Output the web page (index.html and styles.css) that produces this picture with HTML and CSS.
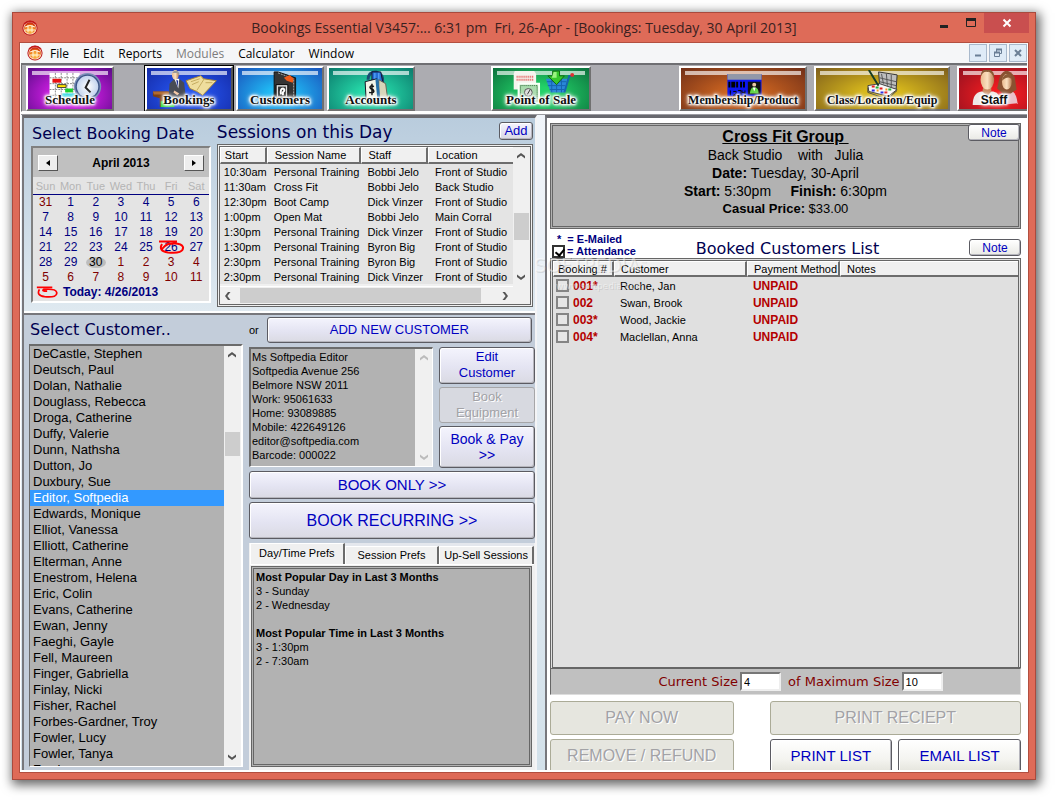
FILE: index.html
```html
<!DOCTYPE html>
<html lang="en">
<head>
<meta charset="utf-8">
<title>Bookings Essential</title>
<link rel="stylesheet" href="styles.css">
</head>
<body>
<svg class="defs" width="0" height="0" aria-hidden="true">
  <defs>
    <radialGradient id="orb" cx=".5" cy=".7" r=".7"><stop offset="0" stop-color="#ffd45a"/><stop offset=".6" stop-color="#ee7a18"/><stop offset="1" stop-color="#c01010"/></radialGradient>
    <symbol id="logo" viewBox="0 0 16 16">
      <circle cx="8" cy="8" r="7.6" fill="#b9141a"/><circle cx="8" cy="8" r="6.6" fill="#ffe9c8"/><circle cx="8" cy="8" r="5.8" fill="url(#orb)"/>
      <path d="M3 7Q8 4 13 7M3 10H13M6 5V12.500M10 5V12.500" fill="none" stroke="#fff3dc" stroke-width="1"/>
      <path d="M2 4Q8-1 14 4" fill="none" stroke="#c41a1a" stroke-width="1.600"/>
    </symbol>
    <symbol id="up" viewBox="0 0 8 6"><path d="M0 5.500V3L4 0L8 3V5.500L4 2.400Z" fill="currentColor"/></symbol>
    <symbol id="down" viewBox="0 0 8 6"><path d="M0 .5V3L4 6L8 3V.5L4 3.600Z" fill="currentColor"/></symbol>
    <symbol id="left" viewBox="0 0 6 8"><path d="M5.500 0H3L0 4L3 8H5.500L2.400 4Z" fill="currentColor"/></symbol>
    <symbol id="right" viewBox="0 0 6 8"><path d="M.5 0H3L6 4L3 8H.5L3.600 4Z" fill="currentColor"/></symbol>
    <linearGradient id="skin" x2="1"><stop offset="0" stop-color="#e9b98e"/><stop offset=".5" stop-color="#fbe0c0"/><stop offset="1" stop-color="#b87e55"/></linearGradient>
    <radialGradient id="clockface"><stop offset="0" stop-color="#fff"/><stop offset="1" stop-color="#c3d4ee"/></radialGradient>
  </defs>
</svg>

<div class="window">
  <header class="titlebar">
    <svg class="logo"><use href="#logo"/></svg>
    <h1>Bookings Essential V3457:... 6:31 pm&nbsp; Fri, 26-Apr - [Bookings: Tuesday, 30 April 2013]</h1>
    <div class="caption">
      <button type="button" aria-label="Minimize"><svg width="10" height="12"><path d="M1 9.500H9" stroke="#222" stroke-width="3"/></svg></button>
      <button type="button" aria-label="Maximize"><svg width="12" height="12"><path d="M1.500 2V9.500H10.500V2" fill="none" stroke="#222"/><path d="M1 2.500H11" stroke="#222" stroke-width="3"/></svg></button>
      <button type="button" class="close" aria-label="Close"><svg width="10" height="10"><path d="M1.500 1.500L8.500 8.500M8.500 1.500L1.500 8.500" stroke="#fff" stroke-width="2"/></svg></button>
    </div>
  </header>

  <div class="client">
    <nav class="menubar">
      <svg class="logo"><use href="#logo"/></svg>
      <button type="button">File</button>
      <button type="button">Edit</button>
      <button type="button">Reports</button>
      <button type="button" disabled>Modules</button>
      <button type="button">Calculator</button>
      <button type="button">Window</button>
      <div class="mdi">
        <button type="button" aria-label="Minimize child"><svg width="8" height="8"><path d="M1 6.500H7" stroke="#6b7f96" stroke-width="2"/></svg></button>
        <button type="button" aria-label="Restore child"><svg width="10" height="10"><path d="M3.500 4V1.500H8.500V5.500H7M1.500 4.500H6.500V8.500H1.500Z" fill="none" stroke="#6b7f96"/><path d="M3 1.500H9M1 4.500H7" stroke="#6b7f96" stroke-width="2"/></svg></button>
        <button type="button" aria-label="Close child"><svg width="8" height="8"><path d="M1 1L7 7M7 1L1 7" stroke="#6b7f96" stroke-width="2"/></svg></button>
      </div>
    </nav>

    <div class="toolbar">
      <button type="button" class="tool purple">
        <svg viewBox="0 0 82 40">
          <path d="M20 3H51V30H20Z" fill="#fff"/><path d="M20 8H51M20 14H51M20 20H51M20 26H51M26 3V30M32 3V30M38 3V30M44 3V30" stroke="#888" stroke-dasharray="2 1"/>
          <path d="M23 9H32V13H23Z" fill="#e81010"/><path d="M28 15H37V18H28Z" fill="#ffe400" stroke="#443"/><path d="M36 19H44V23H36Z" fill="#18d030"/><path d="M33 26H50" stroke="#30d8e8" stroke-width="4"/>
          <circle cx="59" cy="17" r="14" fill="#7d91b8"/><circle cx="59" cy="17" r="12.500" fill="#3c5488"/><circle cx="59" cy="17" r="11" fill="url(#clockface)"/><path d="M61 10L57 18L62 23" fill="none" stroke="#222" stroke-width="2"/>
        </svg><span>Schedule</span></button>
      <button type="button" class="tool blue active">
        <svg viewBox="0 0 82 40">
          <path d="M4 22H20L24 27H34V32H16V38H11V29L4 27Z" fill="#7a3f16"/><path d="M4 22H20L22 25H5Z" fill="#b06a30"/><path d="M12 32H26V38H12Z" fill="#2edb3e"/>
          <path d="M20 31L21 14L26 9H31L36 13L38 30L30 33Z" fill="#474b55"/><path d="M26 9H31L30 19Z" fill="#fff"/><path d="M28 10L30 11L29 18Z" fill="#182a90"/><ellipse cx="27" cy="5" rx="3.500" ry="5" fill="url(#skin)"/><path d="M24 3Q27-2 31 3V6L29 3Z" fill="#999"/><path d="M26 21L31 24L29 26L25 23Z" fill="#f4c8a4"/>
          <path d="M38 11L53 6L56 9L69 11L55 26L49 22L42 19Z" fill="#efdd9d" stroke="#a8873a"/><path d="M53 6L56 10L49 21M43 12L52 9M44 15L51 12M58 13L65 13" fill="none" stroke="#c3aa5f"/>
        </svg><span>Bookings</span></button>
      <button type="button" class="tool sky">
        <svg viewBox="0 0 82 40">
          <path d="M35 2H39L57 8V30H35Z" fill="#343434" stroke="#111"/><path d="M39 3L55 9V28" fill="none" stroke="#aaa" stroke-dasharray="2 1"/><path d="M45 8L51 5L55 9L54 13L48 11Z" fill="#f05a18"/><path d="M37 15H49V28H37Z" fill="#ddd" stroke="#000"/><path d="M39 17H47V27H39Z" fill="#333"/><path d="M42 25Q41 19 44 19Q47 20 44 23V26" fill="none" stroke="#fff" stroke-width="2"/>
        </svg><span>Customers</span></button>
      <button type="button" class="tool teal">
        <svg viewBox="0 0 82 40">
          <path d="M38 10Q38 2 46 2Q54 4 53 13" fill="none" stroke="#194b72" stroke-width="3"/><path d="M42 2H51L53 12L42 13Z" fill="#2670d8" stroke="#113"/><path d="M45 3V12M49 3V12" stroke="#68b4ff"/>
          <path d="M35 12L47 9L49 29L36 31Z" fill="#f1f4e8" stroke="#112"/><path d="M49 10L56 14L58 29H49Z" fill="#d8d5b8" stroke="#665"/><path d="M47 9L49 30" stroke="#2670a8" stroke-width="3"/><path d="M44 17Q40 15 40 18Q41 20 43 20Q46 24 39 23M42 14V26" fill="none" stroke="#111" stroke-width="1.500"/>
        </svg><span>Accounts</span></button>
      <i class="gap pos-gap"></i>
      <button type="button" class="tool green wide">
        <svg viewBox="0 0 94 40">
          <path d="M20 1H40L42 4V20H19V4Z" fill="#f4f4ee"/><path d="M22 7H39M22 10H39" stroke="#e25555" stroke-width="2" stroke-dasharray="1 1"/><path d="M24 14H45V34H24Z" fill="#a9dcae" stroke="#f8fff8" stroke-width="2"/><path d="M26 16H43V32H26Z" fill="none" stroke="#356a3e" stroke-dasharray="1 1"/><circle cx="34" cy="23" r="4" fill="#ddd" stroke="#555"/><path d="M33 25L36 20" stroke="#333"/>
          <path d="M52 9H74L71 23H57Z" fill="#2a87d8"/><path d="M53 12H73M54 16H72M56 20H71M58 9V23M63 9V23M68 9V23" stroke="#1564b0"/><path d="M71 23L76 6H79" fill="none" stroke="#1564b0" stroke-width="2"/><circle cx="79" cy="5" r="2" fill="#e03030"/>
          <path d="M59 1H66V6H71L63 15L54 6H59Z" fill="#36c72c" stroke="#116811"/><path d="M60 2H63V8H58Z" fill="#9bf480"/><path d="M74 25V35" stroke="#ddd" stroke-width="2"/>
        </svg><span>Point of Sale</span></button>
      <i class="gap member-gap"></i>
      <button type="button" class="tool rust member">
        <svg viewBox="0 0 122 40">
          <path d="M45 4H80V27H45Z" fill="#0b16f0"/><path d="M45 4H80V10H45Z" fill="#9298a8"/><path d="M47 12V18M50 12V18M52 12V18M55 12V18M59 12V18M62 12V18" stroke="#000" stroke-width="2"/><path d="M66 12H79V25H66Z" fill="#111"/><circle cx="72.500" cy="15" r="2" fill="#eac7a8"/><path d="M68 24Q69 17 72 18Q77 17 77 24Z" fill="#62d346"/><path d="M71 18H74L72.500 22Z" fill="#fff"/>
          <path d="M48 21V26M51 22H54V24L51 26H54M56 21H59V26H56M60 21V23H63M63 21V26" fill="none" stroke="#000"/>
        </svg><span>Membership/Product</span></button>
      <button type="button" class="tool gold equip">
        <svg viewBox="0 0 129 40">
          <path d="M61 2L80 5L79 20L62 15Z" fill="#bdbdbd" stroke="#333"/><path d="M64 4L66 14M69 4L70 16M74 5V18M62 8L79 12M62 12L79 16" stroke="#555"/><path d="M50 16L62 14L80 20L71 27L51 22Z" fill="#f7f7f7" stroke="#444"/><path d="M50 18V23L70 30L80 21" fill="none" stroke="#444"/>
          <path d="M54 17H57M62 19H65M67 23H70" stroke="#e31b1b" stroke-width="2"/><path d="M58 18H61M71 20H74" stroke="#26b033" stroke-width="2"/><path d="M54 21H57M63 23H66" stroke="#262be0" stroke-width="2"/><path d="M59 21H61M68 20H70" stroke="#f59b18" stroke-width="2"/><path d="M51 0L59 13L61 16" fill="none" stroke="#153d24" stroke-width="2"/>
        </svg><span>Class/Location/Equip</span></button>
      <button type="button" class="tool red staff">
        <svg viewBox="0 0 82 40">
          <path d="M12 36Q12 23 21 22H33Q41 23 41 36Z" fill="#eee9e7"/><path d="M39 36Q39 24 44 22H53Q57 25 58 34Z" fill="#eac0c8"/><path d="M40 6Q47-5 55 7L57 20L51 24H43L37 19Z" fill="#8a5130"/><path d="M23 16H31V22L27 27L22 22Z" fill="#c98b62"/><ellipse cx="27" cy="10" rx="7" ry="10" fill="url(#skin)"/><ellipse cx="47" cy="12" rx="5" ry="8" fill="url(#skin)"/><path d="M20 8Q20-2 28-1Q35 1 34 9Q31 1 27 2Q22 1 20 8M42 11Q43 3 51 4L52 10Q49 5 42 11" fill="#8a5a36"/>
        </svg><span>Staff</span></button>
    </div>

    <main class="workspace">
      <div class="left-col">
        <section class="top-panel">
          <div class="date-pane">
            <h2>Select Booking Date</h2>
            <div class="calendar">
              <div class="cal-head">
                <button type="button" aria-label="Previous month"><svg width="4" height="6"><path d="M4 0V6L0 3Z"/></svg></button>
                <strong>April 2013</strong>
                <button type="button" aria-label="Next month"><svg width="4" height="6"><path d="M0 0V6L4 3Z"/></svg></button>
              </div>
              <table>
                <thead><tr><th>Sun</th><th>Mon</th><th>Tue</th><th>Wed</th><th>Thu</th><th>Fri</th><th>Sat</th></tr></thead>
                <tbody>
                <tr><td class="other">31</td><td>1</td><td>2</td><td>3</td><td>4</td><td>5</td><td>6</td></tr>
                <tr><td>7</td><td>8</td><td>9</td><td>10</td><td>11</td><td>12</td><td>13</td></tr>
                <tr><td>14</td><td>15</td><td>16</td><td>17</td><td>18</td><td>19</td><td>20</td></tr>
                <tr><td>21</td><td>22</td><td>23</td><td>24</td><td>25</td><td class="today">26<svg viewBox="0 0 26 14"><path d="M0 1.500H18M3 4Q-1 11 9 12.500Q25 14 24 7Q22 2 9 4Q5 6 3 9" fill="none" stroke="#f00" stroke-width="2"/></svg></td><td>27</td></tr>
                <tr><td>28</td><td>29</td><td class="selected"><span>30</span></td><td class="other">1</td><td class="other">2</td><td class="other">3</td><td class="other">4</td></tr>
                <tr><td class="other">5</td><td class="other">6</td><td class="other">7</td><td class="other">8</td><td class="other">9</td><td class="other">10</td><td class="other">11</td></tr>
                </tbody>
              </table>
              <div class="cal-foot"><svg viewBox="0 0 26 14"><path d="M0 1.500H18M3 4Q-1 11 9 12.500Q25 14 23 7Q22 3 8 4Q5 6 12 6" fill="none" stroke="#f00" stroke-width="2"/></svg>Today: 4/26/2013</div>
            </div>
          </div>

          <div class="session-pane">
            <div class="pane-head"><h2>Sessions on this Day</h2><button type="button" class="btn add">Add</button></div>
            <div class="session-box">
              <table class="grid sessions">
                <colgroup><col class="c-start"><col class="c-name"><col class="c-staff"><col class="c-loc"></colgroup>
                <thead><tr><th>Start</th><th>Session Name</th><th>Staff</th><th>Location</th></tr></thead>
                <tbody>
                <tr><td>10:30am</td><td>Personal Training</td><td>Bobbi Jelo</td><td>Front of Studio</td></tr>
                <tr><td>11:30am</td><td>Cross Fit</td><td>Bobbi Jelo</td><td>Back Studio</td></tr>
                <tr><td>12:30pm</td><td>Boot Camp</td><td>Dick Vinzer</td><td>Front of Studio</td></tr>
                <tr><td>1:00pm</td><td>Open Mat</td><td>Bobbi Jelo</td><td>Main Corral</td></tr>
                <tr><td>1:30pm</td><td>Personal Training</td><td>Dick Vinzer</td><td>Front of Studio</td></tr>
                <tr><td>1:30pm</td><td>Personal Training</td><td>Byron Big</td><td>Front of Studio</td></tr>
                <tr><td>2:30pm</td><td>Personal Training</td><td>Byron Big</td><td>Front of Studio</td></tr>
                <tr><td>2:30pm</td><td>Personal Training</td><td>Dick Vinzer</td><td>Front of Studio</td></tr>
                </tbody>
              </table>
              <div class="vscroll session-v"><svg><use href="#up"/></svg><i></i><svg><use href="#down"/></svg></div>
              <div class="hscroll"><svg><use href="#left"/></svg><i></i><svg><use href="#right"/></svg></div>
            </div>
          </div>
        </section>

        <section class="bottom-panel">
          <div class="customer-pane">
            <h2 id="cust-label">Select Customer..</h2>
            <div class="customer-box">
              <ul role="listbox" aria-labelledby="cust-label">
                <li role="option">DeCastle, Stephen</li><li role="option">Deutsch, Paul</li><li role="option">Dolan, Nathalie</li><li role="option">Douglass, Rebecca</li><li role="option">Droga, Catherine</li><li role="option">Duffy, Valerie</li><li role="option">Dunn, Nathsha</li><li role="option">Dutton, Jo</li><li role="option">Duxbury, Sue</li><li role="option" aria-selected="true">Editor, Softpedia</li><li role="option">Edwards, Monique</li><li role="option">Elliot, Vanessa</li><li role="option">Elliott, Catherine</li><li role="option">Elterman, Anne</li><li role="option">Enestrom, Helena</li><li role="option">Eric, Colin</li><li role="option">Evans, Catherine</li><li role="option">Ewan, Jenny</li><li role="option">Faeghi, Gayle</li><li role="option">Fell, Maureen</li><li role="option">Finger, Gabriella</li><li role="option">Finlay, Nicki</li><li role="option">Fisher, Rachel</li><li role="option">Forbes-Gardner, Troy</li><li role="option">Fowler, Lucy</li><li role="option">Fowler, Tanya</li><li role="option">Fowler</li>
              </ul>
              <div class="vscroll customer-v"><svg><use href="#up"/></svg><i></i><svg><use href="#down"/></svg></div>
            </div>
          </div>

          <div class="booking-pane">
            <div class="new-row"><span>or</span><button type="button" class="btn">ADD NEW CUSTOMER</button></div>
            <div class="detail-row">
              <div class="address">
                <textarea readonly aria-label="Customer details">Ms Softpedia Editor
Softpedia Avenue 256
Belmore NSW 2011
Work: 95061633
Home: 93089885
Mobile: 422649126
editor@softpedia.com
Barcode: 000022</textarea>
                <div class="vscroll faint"><svg><use href="#up"/></svg><svg><use href="#down"/></svg></div>
              </div>
              <div class="side-buttons">
                <button type="button" class="btn">Edit Customer</button>
                <button type="button" class="btn" disabled>Book Equipment</button>
                <button type="button" class="btn pay">Book &amp; Pay &gt;&gt;</button>
              </div>
            </div>
            <button type="button" class="btn only">BOOK ONLY &gt;&gt;</button>
            <button type="button" class="btn recurring">BOOK RECURRING &gt;&gt;</button>
            <div class="tabs">
              <div class="tablist" role="tablist">
                <button type="button" role="tab" aria-selected="true">Day/Time Prefs</button>
                <button type="button" role="tab">Session Prefs</button>
                <button type="button" role="tab">Up-Sell Sessions</button>
              </div>
              <div class="tabpanel" role="tabpanel">
                <h3>Most Popular Day in Last 3 Months</h3>
                <p>3 - Sunday</p><p>2 - Wednesday</p>
                <h3 class="second">Most Popular Time in Last 3 Months</h3>
                <p>3 - 1:30pm</p><p>2 - 7:30am</p>
              </div>
            </div>
          </div>
        </section>
      </div>

      <section class="right-col">
        <div class="info">
          <button type="button" class="btn note">Note</button>
          <h2>Cross Fit Group&nbsp;</h2>
          <p>Back Studio&nbsp;&nbsp;&nbsp; with&nbsp;&nbsp; Julia</p>
          <p><b>Date:</b> Tuesday, 30-April</p>
          <p><b>Start:</b> 5:30pm&nbsp;&nbsp;&nbsp;&nbsp; <b>Finish:</b> 6:30pm</p>
          <p class="price"><b>Casual Price:</b> $33.00</p>
        </div>
        <div class="legend-row">
          <div class="legend"><div class="mailed">*&nbsp; = E-Mailed</div><label><input type="checkbox" checked>= Attendance</label></div>
          <h2>Booked Customers List</h2>
          <button type="button" class="btn note">Note</button>
        </div>
        <div class="booked-box">
          <table class="grid booked">
            <colgroup><col class="b-num"><col class="b-cust"><col class="b-pay"><col></colgroup>
            <thead><tr><th>Booking #</th><th>Customer</th><th>Payment Method</th><th>Notes</th></tr></thead>
            <tbody>
            <tr><td><label><input type="checkbox">001*</label></td><td>Roche, Jan</td><td class="unpaid">UNPAID</td><td></td></tr>
            <tr><td><label><input type="checkbox">002</label></td><td>Swan, Brook</td><td class="unpaid">UNPAID</td><td></td></tr>
            <tr><td><label><input type="checkbox">003*</label></td><td>Wood, Jackie</td><td class="unpaid">UNPAID</td><td></td></tr>
            <tr><td><label><input type="checkbox">004*</label></td><td>Maclellan, Anna</td><td class="unpaid">UNPAID</td><td></td></tr>
            </tbody>
          </table>
        </div>
        <div class="size-bar">
          <label for="cur">Current Size</label><input id="cur" type="text" value="4">
          <label for="max" class="max">of Maximum Size</label><input id="max" type="text" value="10">
        </div>
        <div class="actions">
          <button type="button" class="btn plain a-pay" disabled>PAY NOW</button>
          <button type="button" class="btn plain a-receipt" disabled>PRINT RECIEPT</button>
          <button type="button" class="btn plain a-remove" disabled>REMOVE / REFUND</button>
          <div class="pair"><button type="button" class="btn plain">PRINT LIST</button><button type="button" class="btn plain">EMAIL LIST</button></div>
        </div>
      </section>
      <div class="watermark" aria-hidden="true"><b>SOFTPEDIA<sup>™</sup></b><span>www.softpedia.com</span></div>
    </main>
  </div>
</div>
</body>
</html>
```
FILE: styles.css
```css
* { box-sizing: border-box; }
body {
  margin: 0;
  height: 100vh;
  padding: 12px 20px 20px 12px;
  background: #fff;
  font-family: "Liberation Sans", Arial, sans-serif;
  font-size: 11px;
  color: #000;
  overflow: hidden;
}
h1, h2, h3, p, ul { margin: 0; padding: 0; font-weight: normal; }
button { font: inherit; margin: 0; padding: 0; }
.defs { position: absolute; }

/* Window frame */
.window {
  height: 100%;
  display: flex;
  flex-direction: column;
  padding: 0 6px 6px;
  background: #de6b58;
  border: 1px solid #a94a3d;
  box-shadow: 2px 3px 10px 2px rgba(0, 0, 0, .6);
}
.titlebar {
  flex: none;
  height: 29px;
  display: flex;
  align-items: center;
  padding-left: 3px;
}
.logo { flex: none; width: 16px; height: 16px; }
.titlebar h1 {
  flex: 1;
  padding-left: 80px;
  text-align: center;
  font: 14px/30px "Open Sans", "Noto Sans", sans-serif;
  color: #3a211f;
  white-space: nowrap;
}
.caption { flex: none; align-self: flex-start; display: flex; }
.caption button {
  width: 27px;
  height: 20px;
  display: grid;
  place-items: center;
  border: 0;
  background: none;
}
.caption .close { width: 45px; background: #c94f4f; }
.client {
  flex: 1;
  min-height: 0;
  display: flex;
  flex-direction: column;
  border: 1px solid #b24f40;
  background: #fff;
  padding: 0 1px 2px;
}

/* Menu */
.menubar {
  flex: none;
  display: flex;
  align-items: center;
  height: 20px;
  padding-left: 6px;
  background: #f5f6f8;
  font-family: "Open Sans", "Noto Sans", sans-serif;
  font-size: 12px;
}
.menubar > button { border: 0; background: none; padding: 0 7px; color: #000; }
.menubar > button:disabled { color: #7d7d7d; }
.mdi { margin-left: auto; display: flex; gap: 2px; }
.mdi button {
  width: 18px;
  height: 18px;
  display: grid;
  place-items: center;
  border: 1px solid #a9b9cc;
  background: #dfebf7;
}

/* Picture toolbar */
.toolbar {
  flex: none;
  display: flex;
  height: 49px;
  padding: 1px 0 0 4px;
  overflow: hidden;
  background: #acacb1;
  border-top: 2px solid #6f6f73;
  border-left: 1px solid #6f6f73;
  border-bottom: 1px solid #fff;
}
.tool {
  --edge: #500a80;
  --core: #e020f0;
  flex: none;
  position: relative;
  width: 88px;
  height: 45px;
  margin-right: 3px;
  border: 2px solid;
  border-color: #fff #707070 #707070 #fff;
  background: radial-gradient(ellipse at 50% 65%, var(--core) 20%, var(--edge) 105%);
}
.tool::before {
  content: "";
  position: absolute;
  top: 3px;
  left: 4px;
  right: 4px;
  height: 4px;
  background: rgba(255, 255, 255, .65);
}
.tool svg { position: absolute; top: 2px; left: 0; width: 100%; height: 39px; }
.tool span {
  position: absolute;
  left: 0;
  right: 0;
  bottom: 2px;
  text-align: center;
  font: bold 13px/14px "Liberation Serif", serif;
  color: #111;
  white-space: nowrap;
  text-shadow: 0 0 2px #fff, 0 0 2px #fff, 1px 1px 2px #fff, -1px -1px 2px #fff, 0 0 3px #fff, 0 0 4px #fff, 0 0 5px #fff, 0 0 6px #fff;
}
.purple { margin-right: 31px; }
.blue { --edge: #1428a0; --core: #2453ee; }
.blue.active { border-color: #fff #555 #555 #fff; outline: 1px solid #000; outline-offset: 0; }
.sky { --edge: #1a4cb8; --core: #20baf4; }
.teal { --edge: #0a7468; --core: #25d8a8; }
.green { --edge: #0b6a3a; --core: #22d268; }
.rust { --edge: #6b2c18; --core: #cc6420; }
.gold { --edge: #78581c; --core: #d8b91c; }
.red { --edge: #8c1020; --core: #ef1c20; }
.wide { width: 100px; }
.member { width: 128px; margin-right: 7px; }
.equip { width: 136px; margin-right: 7px; }
.member span, .equip span { font-size: 12px; }
.staff span { right: 14px; font: bold 12px/14px "Liberation Sans", sans-serif; }
.gap { flex: 0 0 73px; }
.member-gap { flex-basis: 85px; }

/* Workspace */
.workspace {
  flex: 1;
  min-height: 0;
  position: relative;
  display: grid;
  grid-template-columns: minmax(0, 516fr) minmax(0, 483fr);
  column-gap: 8px;
  margin-top: 2px;
  padding-left: 1px;
  border-top: 1px solid #9b9ba0;
  background: linear-gradient(#f1f5fa, #d3e1ea);
}
.left-col {
  min-height: 0;
  display: flex;
  flex-direction: column;
  border-left: 2px solid #77777c;
  border-top: 3px solid #69696e;
  border-right: 2px solid #f4f4f6;
}
h2 { font: 16px/24px "DejaVu Sans", Verdana, sans-serif; color: #000050; white-space: nowrap; }
.top-panel {
  flex: none;
  display: grid;
  grid-template-columns: minmax(0, 188fr) minmax(0, 318fr);
  padding: 0 2px 4px 6px;
  background: linear-gradient(#b9ccdd, #dfe9f0);
  border-bottom: 2px solid #fff;
}
.date-pane { padding: 4px 6px 0 0; }
.date-pane h2 { padding-left: 2px; }
.calendar {
  margin-left: 1px;
  padding-bottom: 2px;
  background: #e4e4e4;
  border: 2px solid;
  border-color: #808080 #fff #fff #808080;
}
.cal-head {
  display: flex;
  justify-content: space-between;
  align-items: center;
  height: 29px;
  padding: 0 5px;
  background: #c0c0c0;
  font-size: 12px;
}
.cal-head button {
  width: 20px;
  height: 16px;
  display: grid;
  place-items: center;
  background: #eee;
  border: 1px solid;
  border-color: #fff #555 #555 #fff;
}
.calendar table { width: 100%; table-layout: fixed; border-collapse: collapse; color: #000080; text-align: center; }
.calendar th { height: 17px; padding: 2px 0 0; font-weight: normal; color: #b4b4b4; border-bottom: 1px solid #000080; }
.calendar td { height: 15px; padding: 0; font-size: 12px; line-height: 15px; }
.calendar .other { color: #800000; }
.today { position: relative; }
.today svg { position: absolute; left: 0; top: 0; width: 26px; height: 14px; }
.selected { color: #000; }
.selected span { display: inline-block; width: 20px; line-height: 11px; border-radius: 50%; background: #bdbdbd; }
.cal-foot { display: flex; align-items: center; height: 14px; gap: 3px; font-size: 12px; font-weight: bold; color: #000080; padding-left: 3px; }
.cal-foot svg { width: 24px; height: 12px; }

.pane-head { display: flex; align-items: center; justify-content: space-between; height: 26px; }
.pane-head h2 { font-size: 17px; padding-top: 2px; }
.btn {
  color: #0000c0;
  font-size: 13px;
  line-height: 16px;
  border: 1px solid #5b5b62;
  border-radius: 3px;
  background: linear-gradient(#f4f4fd, #e4e4f2 55%, #dadae3);
  box-shadow: inset 1px 1px #fff, inset -1px -1px #b6b6bd;
}
.btn:disabled {
  color: #a2a2a6;
  border-color: #a6a6a8;
  background: #d7d9e0;
  box-shadow: none;
  text-shadow: 1px 1px #fff;
}
.add { width: 34px; height: 18px; }
.session-box {
  display: grid;
  grid-template-columns: minmax(0, 1fr) 17px;
  height: 163px;
  border: 3px double #666;
  background: #f0f0f0;
}
.grid { width: 100%; table-layout: fixed; border-collapse: separate; border-spacing: 0; background: #e4e4e4; }
.grid th {
  padding: 0 0 0 7px;
  text-align: left;
  font-weight: normal;
  background: #f0f0f0;
  border: solid;
  border-width: 1px 2px 2px 1px;
  border-color: #fff #6d6d6d #6d6d6d #fff;
  white-space: nowrap;
}
.grid th:last-child { border-right-width: 0; }
.grid td { padding: 0; white-space: nowrap; }
.sessions th { height: 17px; }
.sessions td { height: 15px; padding-left: 7px; }
.sessions td:first-child, .sessions th:first-child { padding-left: 4px; }
.sessions { align-self: start; }
.c-start { width: 16%; }
.c-name { width: 32%; }
.c-staff { width: 23%; }
.vscroll { display: flex; flex-direction: column; align-items: center; justify-content: space-between; background: #f0f0f0; color: #555; padding: 6px 1px; }
.vscroll svg { flex: none; width: 8px; height: 6px; }
.vscroll i { align-self: stretch; background: #cdcdcd; }
.session-v i { height: 27px; margin-top: 19px; }
.hscroll { display: flex; align-items: center; justify-content: space-between; padding: 0 5px; color: #555; border-top: 1px solid #fff; }
.hscroll svg { flex: none; width: 6px; height: 8px; }
.hscroll i { flex: 0 1 85%; height: 15px; margin-right: 12px; background: #cdcdcd; }

.bottom-panel {
  flex: 1;
  min-height: 0;
  display: grid;
  grid-template-columns: minmax(0, 214fr) minmax(0, 286fr);
  column-gap: 6px;
  padding-left: 5px;
  background: #c3cdda;
  border-top: 2px solid #77777c;
}
.customer-pane { min-height: 0; display: flex; flex-direction: column; padding-bottom: 3px; }
.customer-pane h2 { line-height: 29px; padding-left: 1px; }
.customer-box {
  flex: 1;
  min-height: 0;
  display: grid;
  grid-template-columns: minmax(0, 1fr) 17px;
  overflow: hidden;
  background: #b2b2b2;
  border: solid;
  border-width: 2px 2px 1px 1px;
  border-color: #6b6b6b #fff #fff #6b6b6b;
}
.customer-box ul { list-style: none; font-size: 13px; line-height: 16px; min-height: 0; overflow: hidden; }
.customer-box li { padding-left: 3px; white-space: nowrap; }
.customer-box [aria-selected="true"] { background: #3399ff; color: #fff; }
.customer-v i { height: 24px; margin-bottom: 224px; }

.booking-pane { min-height: 0; display: flex; flex-direction: column; }
.new-row { flex: none; display: flex; align-items: center; gap: 8px; height: 29px; padding-right: 3px; }
.new-row .btn { flex: 1; height: 26px; }
.detail-row { flex: none; display: flex; gap: 6px; height: 121px; margin: 3px 0; }
.address {
  flex: 183;
  min-width: 0;
  display: flex;
  height: 120px;
  background: #b2b2b2;
  border: solid;
  border-width: 2px 1px 1px 2px;
  border-color: #6b6b6b #fff #fff #6b6b6b;
}
.address textarea {
  flex: 1;
  min-width: 0;
  border: 0;
  padding: 1px;
  background: none;
  resize: none;
  overflow: hidden;
  font: 11px/14px "Liberation Sans", Arial, sans-serif;
  outline: 0;
}
.faint { width: 17px; color: #bbb; }
.side-buttons { flex: 97; min-width: 0; display: grid; grid-template-rows: 37fr 37fr 42fr; gap: 3px; }
.side-buttons .btn { padding: 0 12px; min-height: 0; }
.side-buttons .pay { font-size: 14px; padding: 0 8px; }
.only, .recurring { flex: none; font-size: 15px; }
.only { height: 28px; }
.recurring { height: 37px; margin: 3px 0 4px; font-size: 16px; }
.tabs { flex: 1; min-height: 0; display: flex; flex-direction: column; background: #f0f0f0; padding: 0 1px 3px; }
.tablist { flex: none; display: flex; align-items: flex-end; height: 22px; border-bottom: 1px solid #fff; background: #e4e7ed; }
.tablist button { flex: 92; height: 18px; padding-bottom: 2px; border: solid; border-width: 1px 2px 0 1px; border-color: #fff #6b6b6b #fff #fff; background: #f0f0f0; white-space: nowrap; }
.tablist button[aria-selected="true"] { height: 21px; }
.tabpanel {
  flex: 1;
  min-height: 0;
  margin: 1px 2px 0 1px;
  padding: 1px 2px;
  background: #b2b2b2;
  border: 3px double #666;
  line-height: 14px;
}
.tabpanel h3 { font-size: 11px; font-weight: bold; }
.tabpanel .second { margin-top: 14px; }

/* Booked customers */
.right-col {
  min-height: 0;
  display: flex;
  flex-direction: column;
  padding: 5px 6px 0 3px;
  overflow: hidden;
  background: #fff;
  border-left: 2px solid #77777c;
  border-top: 3px solid #69696e;
}
.info {
  flex: none;
  position: relative;
  height: 106px;
  padding-top: 2px;
  text-align: center;
  background: #b2b2b2;
  border: 3px double #666;
  font-size: 14px;
  line-height: 18px;
}
.info h2 { font: bold 16px/18px "Liberation Sans", sans-serif; color: #000; text-decoration: underline; }
.info .price { font-size: 13px; line-height: 17px; }
.note { width: 52px; height: 17px; font-size: 12px; line-height: 14px; background: linear-gradient(#fff, #e9e9e4); }
.info .note { position: absolute; top: -2px; right: -2px; }
.legend-row { flex: none; display: grid; grid-template-columns: 1fr auto 1fr; align-items: center; height: 29px; }
.legend { font-weight: bold; line-height: 12px; color: #000080; padding-left: 2px; }
.legend .mailed { padding-left: 5px; }
.legend label { display: flex; align-items: center; gap: 2px; }
.legend-row h2 { padding: 8px 0 0 4px; }
.legend-row .note { justify-self: end; margin-top: 5px; }
input[type="checkbox"] {
  appearance: none;
  flex: none;
  width: 13px;
  height: 13px;
  margin: 0;
  border: 2px solid #858585;
  background: #e6e6e6;
}
.legend input:checked {
  border-color: #333;
  background: #fff;
  position: relative;
}
.legend input:checked::after {
  content: "";
  position: absolute;
  left: 3px;
  top: 0;
  width: 4px;
  height: 7px;
  border: solid #000;
  border-width: 0 2px 2px 0;
  transform: rotate(40deg);
}
.booked-box { flex: 1; min-height: 0; background: #e0e0e0; border: 3px double #666; border-bottom-width: 1px; }
.booked { background: #e0e0e0; }
.booked th { height: 16px; padding-left: 6px; }
.booked th:first-child { padding-left: 4px; }
.booked td { height: 17px; padding-left: 6px; }
.booked td:first-child { padding-left: 3px; }
.booked label { display: flex; align-items: center; gap: 4px; }
.booked label, .unpaid { font-size: 12px; font-weight: bold; color: #b40000; }
.b-num { width: 61px; }
.b-cust { width: 133px; }
.b-pay { width: 93px; }
.watermark {
  position: absolute;
  left: 51%;
  top: 139px;
  color: rgba(255, 255, 255, .45);
  text-shadow: 1px 1px rgba(120, 120, 120, .2);
  font-family: "DejaVu Sans", sans-serif;
  pointer-events: none;
}
.watermark b { display: block; font-size: 19px; line-height: 22px; font-weight: normal; }
.watermark sup { font-size: 8px; vertical-align: top; }
.watermark span { display: block; padding-left: 22px; font-size: 9px; line-height: 20px; }
.size-bar {
  flex: none;
  display: flex;
  align-items: center;
  justify-content: center;
  gap: 2px;
  height: 27px;
  padding-left: 30px;
  background: #c0c0c0;
  border: 1px solid;
  border-color: #666 #ddd #ddd #666;
  font: 13px/16px "DejaVu Sans", Verdana, sans-serif;
  color: #800000;
}
.size-bar .max { margin-left: 5px; }
.size-bar input {
  width: 41px;
  height: 19px;
  padding: 0 2px;
  font: 11px "Liberation Sans", sans-serif;
  border: 2px solid;
  border-color: #777 #eee #eee #777;
  background: #fff;
}
.actions {
  flex: none;
  display: grid;
  grid-template-columns: minmax(0, 184fr) minmax(0, 252fr);
  grid-template-rows: 33px 31px;
  gap: 5px 36px;
  padding-top: 6px;
}
.plain { height: 34px; font-size: 16px; background: linear-gradient(#fff, #f4f4f0 60%, #e4e4dc); }
.plain:disabled { background: #e6e6df; border-color: #abab97; }
.pair { display: grid; grid-template-columns: 1fr 1fr; gap: 6px; }
.pair .plain { font-size: 15px; }
```
